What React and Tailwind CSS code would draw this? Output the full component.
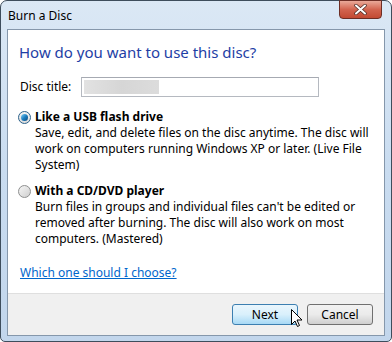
import React from 'react'

const font = { fontFamily: '"Noto Sans", "Open Sans", Arial, sans-serif' }

function Radio({ checked }) {
  if (checked) {
    return (
      <span className="w-[13px] h-[13px] rounded-full border border-[#2c628b] bg-gradient-to-b from-[#f4f4f4] to-[#dcdcdc] flex items-center justify-center shrink-0">
        <span className="w-[7px] h-[7px] rounded-full bg-gradient-to-br from-[#7dd3f7] via-[#1d7fc0] to-[#0a4a80]" />
      </span>
    )
  }
  return (
    <span className="w-[13px] h-[13px] rounded-full border border-[#8e8f8f] bg-gradient-to-br from-[#f6f6f6] to-[#cfcfcf] shrink-0" />
  )
}

export default function App() {
  return (
    <div className="w-[392px] h-[342px] bg-white text-[12px] text-black" style={font}>
      <div className="w-full h-full rounded-t-[7px] rounded-b-[5px] border border-[#3e4d5c] bg-gradient-to-b from-[#dbe8f5] via-[#c9dcf0] to-[#c2d6ec] flex flex-col px-[6px] pb-[5px]">
        {/* title bar */}
        <div className="h-[28px] flex items-start justify-between relative">
          <span className="mt-[6px] pl-[1px] text-[12px]">Burn a Disc</span>
          <button className="mr-[3px] mt-[-1px] w-[43px] h-[19px] rounded-b-[4px] border border-[#6d2e25] bg-gradient-to-b from-[#e9a999] via-[#d2644f] to-[#c24a33] flex items-center justify-center">
            <svg width="13" height="11" viewBox="0 0 13 11">
              <path d="M2 1.5 L11 9.5 M11 1.5 L2 9.5" stroke="#4a2a24" strokeWidth="3.4" strokeLinecap="round" />
              <path d="M2 1.5 L11 9.5 M11 1.5 L2 9.5" stroke="#ffffff" strokeWidth="2" strokeLinecap="round" />
            </svg>
          </button>
        </div>

        {/* content */}
        <div className="flex-1 border border-[#8597ab] bg-white flex flex-col">
          <div className="flex-1 pl-[11px] pr-[10px]">
            <div className="mt-[12px] text-[15px] text-[#1e3ea5] leading-[20px]">How do you want to use this disc?</div>

            <div className="mt-[15px] flex items-center">
              <span className="w-[62px] pl-[1px]">Disc title:</span>
              <div className="w-[238px] h-[20px] border border-[#b5b9c0] border-t-[#a6aab2] bg-white flex items-center px-[2px]">
                <span className="w-[75px] h-[14px] bg-gradient-to-r from-[#e2e2e2] via-[#d6d6d6] to-[#dcdcdc] blur-[0.5px]" />
              </div>
            </div>

            <div className="mt-[12px] flex items-center gap-[4px] ml-[-1px]">
              <Radio checked />
              <span className="font-bold leading-[16px]">Like a USB flash drive</span>
            </div>
            <p className="pl-[16px] leading-[16px]">
              Save, edit, and delete files on the disc anytime. The disc will work on computers running Windows XP or later. (Live File System)
            </p>

            <div className="mt-[10px] flex items-center gap-[4px] ml-[-1px]">
              <Radio />
              <span className="font-bold leading-[16px]">With a CD/DVD player</span>
            </div>
            <p className="pl-[16px] leading-[16px]">
              Burn files in groups and individual files can't be edited or removed after burning. The disc will also work on most computers. (Mastered)
            </p>

            <a href="#" className="block mt-[18px] w-fit pl-[1px] text-[#0066cc] underline leading-[16px]">Which one should I choose?</a>
          </div>

          {/* footer */}
          <div className="h-[42px] border-t border-[#dfdfdf] bg-[#f0f0f0] flex items-center justify-end gap-[9px] pr-[11px] relative">
            <button className="w-[66px] h-[21px] rounded-[3px] border border-[#3c7fb1] bg-gradient-to-b from-[#eaf6fd] via-[#d9f0fc] to-[#a7d9f5] text-[12px] leading-none">Next</button>
            <button className="w-[66px] h-[21px] rounded-[3px] border border-[#707070] bg-gradient-to-b from-[#f2f2f2] via-[#ebebeb] to-[#cfcfcf] text-[12px] leading-none">Cancel</button>
            <svg className="absolute left-[283px] top-[15px]" width="12" height="19" viewBox="0 0 12 19">
              <path d="M0.5 0.5 L0.5 15.5 L4 12 L6.5 17.5 L8.5 16.5 L6 11 L11 11 Z" fill="#ffffff" stroke="#000000" strokeWidth="1" strokeLinejoin="round" />
            </svg>
          </div>
        </div>
      </div>
    </div>
  )
}
